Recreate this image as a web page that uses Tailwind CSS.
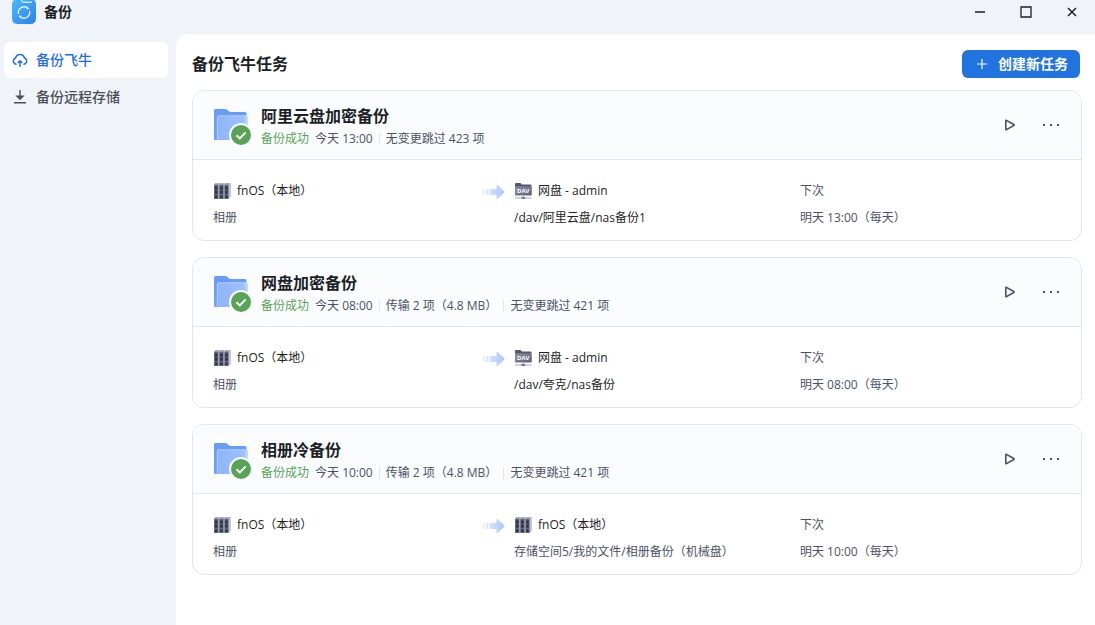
<!doctype html>
<html lang="zh-CN">
  <head>
    <meta charset="UTF-8" />
    <meta name="viewport" content="width=device-width, initial-scale=1.0" />
    <title>备份</title>
    <script src="https://cdn.jsdelivr.net/npm/@tailwindcss/browser@4"></script>
  </head>

  <body
    class="flex min-h-screen flex-col bg-[#f0f4f9] font-['Open_Sans','Noto_Sans_CJK_SC',sans-serif] text-xs leading-5 text-[#4a5264]"
  >
    <!-- Shared icons -->
    <svg class="h-0 w-0" aria-hidden="true">
      <defs>
        <linearGradient id="folderBack" x1="0" y1="0" x2="0" y2="1">
          <stop offset="0" stop-color="#659cf8" />
          <stop offset="1" stop-color="#6fa3fa" />
        </linearGradient>
        <linearGradient id="folderFront" x1="0" y1="0" x2="1" y2="0">
          <stop offset="0" stop-color="#8fb5fb" />
          <stop offset=".85" stop-color="#9dbffc" />
          <stop offset="1" stop-color="#c9dcfe" />
        </linearGradient>
        <linearGradient id="arrowFill" x1="0" y1="0" x2="1" y2="0">
          <stop offset="0" stop-color="#d3e1fe" />
          <stop offset="1" stop-color="#a9c6fe" />
        </linearGradient>
        <linearGradient id="davFill" x1="0" y1="0" x2="1" y2="1">
          <stop offset="0" stop-color="#8f93a6" />
          <stop offset="1" stop-color="#5b5f73" />
        </linearGradient>
      </defs>
      <symbol id="folder" viewBox="0 0 40 40">
        <path d="M1 5.500q0-1.500 1.500-1.500h9.500q1 0 1.800.6l2.400 1.800q.8.600 1.800.600h14q1.500 0 1.500 1.500V34q0 1-1 1H2q-1 0-1-1z" fill="url(#folderBack)" />
        <path d="M4 12q0-1.500 1.500-1.500h28q1.500 0 1.500 1.500v21q0 2-2 2H4z" fill="url(#folderFront)" />
        <path d="M4.300 34V12.300q0-1.500 1.500-1.500h28" fill="none" stroke="#c4d8fe" stroke-width=".7" />
        <circle cx="28" cy="30" r="12" fill="#fafcfe" />
        <circle cx="28" cy="30" r="10" fill="#58a456" />
        <path d="m23.500 30.200 3.300 3.200 5.900-6" fill="none" stroke="#fff" stroke-width="2" />
      </symbol>
      <symbol id="nas" viewBox="0 0 18 18">
        <path d="M1 3 2.500 1H18v13.500L15.500 17H1z" fill="#c3c5d2" />
        <path d="M1 3h4.400v14H1zM6.200 3h4.400v14H6.200zM11.400 3h4.200v14h-4.200z" fill="#63677c" />
        <path d="M1 3 2 1.500h4.200L5.400 3zM6.200 3l1-1.500h4.200L10.600 3zM11.400 3l1-1.500h4.200l-1 1.500z" fill="#9598aa" />
        <path d="M2 4.500h2.500v3H2zM7.200 4.500h2.500v3H7.200zM12.300 4.500h2.400v3h-2.400zM2 8.500h2.500v3.300H2zM7.200 8.500h2.500v3.300H7.200zM12.300 8.500h2.400v3.300h-2.400zM2 13.500h2.500V16H2zM7.200 13.500h2.500V16H7.200zM12.300 13.500h2.400V16h-2.400z" fill="#2d3247" />
      </symbol>
      <symbol id="dav" viewBox="0 0 18 18">
        <path d="M1 2q0-1 1-1h4.500L8 2.500h8.500q1 0 1 1V13H1z" fill="#55596c" />
        <path d="M1 4.500h16.500V13q0 .500-.500.500H1.500q-.500 0-.500-.500z" fill="url(#davFill)" />
        <path d="M8.700 13.500h1.200v1.500H8.700zM1 15.500h16.500v1H1z" fill="#a3a6b5" />
        <path d="M7.500 15h3.600v2H7.500z" fill="#777b8e" />
        <text x="9.200" y="11.200" text-anchor="middle" font-size="6" font-weight="700" fill="#fff">DAV</text>
      </symbol>
      <symbol id="arrow" viewBox="0 0 22 16">
        <path d="M0 6h1.500v6H0z" fill="#e6eefe" />
        <path d="M3 6h2.500v6H3z" fill="#dce7fe" />
        <path d="M7 6h6.500V2.500q0-1 .8-.4l6.700 6q.800.900 0 1.800l-6.700 6q-.8.600-.8-.4V12H7z" fill="url(#arrowFill)" />
      </symbol>
      <symbol id="play" viewBox="0 0 16 16">
        <path d="M3.800 3.800v8.400q0 .800.700.400l7.300-4.100q.700-.500 0-1L4.500 3.400q-.7-.400-.7.400z" fill="none" stroke="currentColor" stroke-width="1.600" stroke-linejoin="round" />
      </symbol>
      <symbol id="more" viewBox="0 0 18 18">
        <path d="M1 8h2v2H1zM8 8h2v2H8zM15 8h2v2h-2z" fill="currentColor" />
      </symbol>
    </svg>

    <header class="flex h-[34px] items-start justify-between pl-3 text-[#1b1f26]">
      <div class="flex items-center gap-2">
        <svg class="size-6" viewBox="0 0 24 24" aria-hidden="true">
          <defs>
            <linearGradient id="logoFill" x1="0" y1="0" x2="1" y2="1">
              <stop offset="0" stop-color="#4bb8fb" />
              <stop offset="1" stop-color="#2b80ee" />
            </linearGradient>
          </defs>
          <path d="M2 0h20q2 1.500 2 4v14q0 6-6 6H6q-6 0-6-6V4q0-2.500 2-4z" fill="url(#logoFill)" />
          <path d="M9.500 0q.3 2.200 2.500 2.200h8" fill="none" stroke="#c9e6fe" stroke-width="1.400" />
          <path d="M6.400 14a6 6 0 0 1 8.600-6.500M17.600 11a6 6 0 0 1-8.600 6.500M6.400 11.500a6 6 0 0 1 1.500-3M17.600 13.500a6 6 0 0 1-1.500 3" fill="none" stroke="#e9f5ff" stroke-width="1.300" />
          <path d="M14.600 6v3.500l3-.5zM9.400 19v-3.500l-3 .5z" fill="#e9f5ff" />
        </svg>
        <h1 class="text-sm leading-6 font-bold">备份</h1>
      </div>
      <div class="flex">
        <button type="button" aria-label="最小化" class="flex h-6 w-[46px] items-center justify-center">
          <svg class="size-3" viewBox="0 0 12 12"><path d="M1 6h10" stroke="currentColor" stroke-width="1.500" /></svg>
        </button>
        <button type="button" aria-label="最大化" class="flex h-6 w-[46px] items-center justify-center">
          <svg class="size-3" viewBox="0 0 12 12"><path d="M1 1h10v10H1z" fill="none" stroke="currentColor" stroke-width="1.300" /></svg>
        </button>
        <button type="button" aria-label="关闭" class="flex h-6 w-[46px] items-center justify-center">
          <svg class="size-3" viewBox="0 0 12 12"><path d="m2 2 8 8M10 2l-8 8" stroke="currentColor" stroke-width="1.500" /></svg>
        </button>
      </div>
    </header>

    <div class="flex flex-1">
      <nav class="flex w-44 shrink-0 flex-col gap-px pt-2 pr-2 pl-1 text-sm font-medium">
        <a href="#" class="flex h-9 items-center gap-2 rounded-md bg-white px-2 text-[#1f6fe0]">
          <svg class="size-4" viewBox="0 0 16 16" fill="none" stroke="currentColor" stroke-width="1.400">
            <path d="M4.500 12.200H4A3.200 3.200 0 0 1 3.600 6a4.500 4.500 0 0 1 8.800 0 3.200 3.200 0 0 1-.4 6.200h-.5" />
            <path d="M8 15V9M5.700 11 8 8.700l2.300 2.300" />
          </svg>
          备份飞牛
        </a>
        <a href="#" class="flex h-9 items-center gap-2 rounded-md px-2 text-[#4b4f57]">
          <svg class="size-4" viewBox="0 0 16 16" fill="currentColor">
            <path d="M7.300 1h1.400v5.500h4L8 11.300 3.300 6.500h4zM2 13h12v1.400H2z" />
          </svg>
          备份远程存储
        </a>
      </nav>

      <main class="min-w-0 flex-1 rounded-tl-xl bg-white pt-4 pr-[13px] pb-4 pl-4">
        <div class="mb-3 flex items-center justify-between pr-[2px]">
          <h2 class="text-base leading-7 font-bold text-[#1b1f26]">备份飞牛任务</h2>
          <button type="button" class="flex h-7 items-center gap-2 rounded-md bg-[#2173e0] px-3 text-sm font-bold text-white">
            <svg class="size-4" viewBox="0 0 16 16"><path d="M8 3v10M3 8h10" stroke="currentColor" stroke-width="1.200" /></svg>
            创建新任务
          </button>
        </div>

        <div class="flex flex-col gap-4">
          <article class="overflow-hidden rounded-xl border border-[#e0e6f0]">
            <div class="flex h-[69px] items-center border-b border-[#e0e6f0] bg-[#fafcfe] pr-[21px] pl-5">
              <svg class="size-10 shrink-0" aria-hidden="true"><use href="#folder" /></svg>
              <div class="ml-2 min-w-0 flex-1 pt-[3px]">
                <h3 class="mb-px text-base leading-6 font-bold text-[#1b1f26]">阿里云盘加密备份</h3>
                <div class="flex items-center">
                  <span class="mr-[6px] text-[#58a456]">备份成功</span>
                  <span>今天 13:00</span>
                  <span class="mx-[6px] h-3 w-px bg-[#e0e6f0]"></span>
                  <span>无变更跳过 423 项</span>
                </div>
              </div>
              <button type="button" aria-label="开始"><svg class="size-4"><use href="#play" /></svg></button>
              <button type="button" aria-label="更多" class="ml-6"><svg class="size-[18px]"><use href="#more" /></svg></button>
            </div>
            <div class="grid grid-cols-[270fr_31px_286fr_261fr] gap-y-[7px] px-5 pt-[21px] pb-3">
              <div class="flex items-center gap-[6px] text-[#1b1f26]">
                <svg class="size-[18px]" aria-hidden="true"><use href="#nas" /></svg>fnOS（本地）
              </div>
              <svg class="h-4 w-[22px] self-center" aria-hidden="true"><use href="#arrow" /></svg>
              <div class="flex items-center gap-[6px] text-[#1b1f26]">
                <svg class="size-[18px]" aria-hidden="true"><use href="#dav" /></svg>网盘 - admin
              </div>
              <div>下次</div>
              <div>相册</div>
              <div class="col-start-3 text-[#1b1f26]">/dav/阿里云盘/nas备份1</div>
              <div>明天 13:00（每天）</div>
            </div>
          </article>

          <article class="overflow-hidden rounded-xl border border-[#e0e6f0]">
            <div class="flex h-[69px] items-center border-b border-[#e0e6f0] bg-[#fafcfe] pr-[21px] pl-5">
              <svg class="size-10 shrink-0" aria-hidden="true"><use href="#folder" /></svg>
              <div class="ml-2 min-w-0 flex-1 pt-[3px]">
                <h3 class="mb-px text-base leading-6 font-bold text-[#1b1f26]">网盘加密备份</h3>
                <div class="flex items-center">
                  <span class="mr-[6px] text-[#58a456]">备份成功</span>
                  <span>今天 08:00</span>
                  <span class="mx-[6px] h-3 w-px bg-[#e0e6f0]"></span>
                  <span>传输 2 项（4.8 MB）</span>
                  <span class="mx-[6px] h-3 w-px bg-[#e0e6f0]"></span>
                  <span>无变更跳过 421 项</span>
                </div>
              </div>
              <button type="button" aria-label="开始"><svg class="size-4"><use href="#play" /></svg></button>
              <button type="button" aria-label="更多" class="ml-6"><svg class="size-[18px]"><use href="#more" /></svg></button>
            </div>
            <div class="grid grid-cols-[270fr_31px_286fr_261fr] gap-y-[7px] px-5 pt-[21px] pb-3">
              <div class="flex items-center gap-[6px] text-[#1b1f26]">
                <svg class="size-[18px]" aria-hidden="true"><use href="#nas" /></svg>fnOS（本地）
              </div>
              <svg class="h-4 w-[22px] self-center" aria-hidden="true"><use href="#arrow" /></svg>
              <div class="flex items-center gap-[6px] text-[#1b1f26]">
                <svg class="size-[18px]" aria-hidden="true"><use href="#dav" /></svg>网盘 - admin
              </div>
              <div>下次</div>
              <div>相册</div>
              <div class="col-start-3 text-[#1b1f26]">/dav/夸克/nas备份</div>
              <div>明天 08:00（每天）</div>
            </div>
          </article>

          <article class="overflow-hidden rounded-xl border border-[#e0e6f0]">
            <div class="flex h-[69px] items-center border-b border-[#e0e6f0] bg-[#fafcfe] pr-[21px] pl-5">
              <svg class="size-10 shrink-0" aria-hidden="true"><use href="#folder" /></svg>
              <div class="ml-2 min-w-0 flex-1 pt-[3px]">
                <h3 class="mb-px text-base leading-6 font-bold text-[#1b1f26]">相册冷备份</h3>
                <div class="flex items-center">
                  <span class="mr-[6px] text-[#58a456]">备份成功</span>
                  <span>今天 10:00</span>
                  <span class="mx-[6px] h-3 w-px bg-[#e0e6f0]"></span>
                  <span>传输 2 项（4.8 MB）</span>
                  <span class="mx-[6px] h-3 w-px bg-[#e0e6f0]"></span>
                  <span>无变更跳过 421 项</span>
                </div>
              </div>
              <button type="button" aria-label="开始"><svg class="size-4"><use href="#play" /></svg></button>
              <button type="button" aria-label="更多" class="ml-6"><svg class="size-[18px]"><use href="#more" /></svg></button>
            </div>
            <div class="grid grid-cols-[270fr_31px_286fr_261fr] gap-y-[7px] px-5 pt-[21px] pb-3">
              <div class="flex items-center gap-[6px] text-[#1b1f26]">
                <svg class="size-[18px]" aria-hidden="true"><use href="#nas" /></svg>fnOS（本地）
              </div>
              <svg class="h-4 w-[22px] self-center" aria-hidden="true"><use href="#arrow" /></svg>
              <div class="flex items-center gap-[6px] text-[#1b1f26]">
                <svg class="size-[18px]" aria-hidden="true"><use href="#nas" /></svg>fnOS（本地）
              </div>
              <div>下次</div>
              <div>相册</div>
              <div class="col-start-3">存储空间5/我的文件/相册备份（机械盘）</div>
              <div>明天 10:00（每天）</div>
            </div>
          </article>
        </div>
      </main>
    </div>
  </body>
</html>
